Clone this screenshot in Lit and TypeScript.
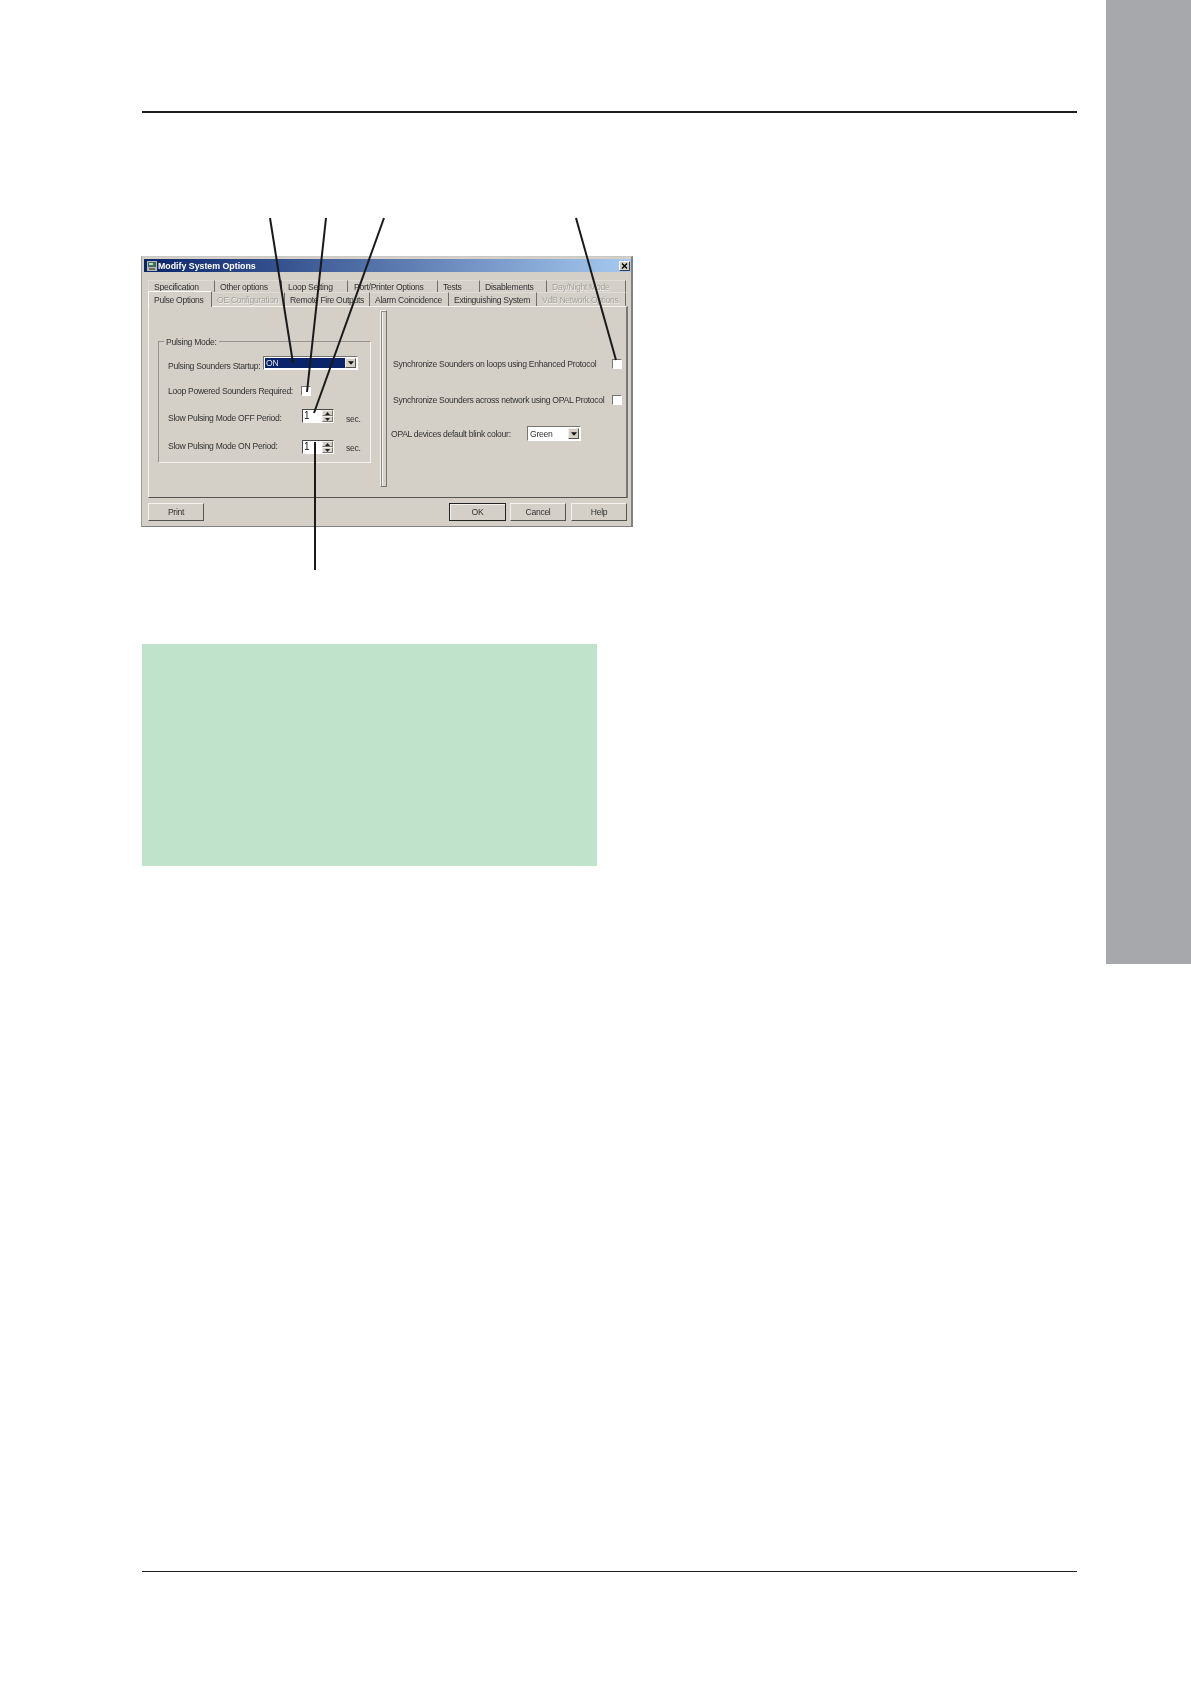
import { LitElement, html, css, svg } from "lit";
import { customElement } from "lit/decorators.js";

interface Tab { label: string; w: number; pad: number; off?: boolean; active?: boolean }

const ROW_BACK: Tab[] = [
  { label: "Specification", w: 67, pad: 5 },
  { label: "Other options", w: 67, pad: 5 },
  { label: "Loop Setting", w: 66, pad: 6 },
  { label: "Port/Printer Options", w: 90, pad: 6 },
  { label: "Tests", w: 42, pad: 5 },
  { label: "Disablements", w: 67, pad: 5 },
  { label: "Day/Night Mode", w: 79, pad: 5, off: true },
];
const ROW_FRONT: Tab[] = [
  { label: "Pulse Options", w: 64, pad: 5, active: true },
  { label: "OE Configuration", w: 73, pad: 5, off: true },
  { label: "Remote Fire Outputs", w: 85, pad: 5 },
  { label: "Alarm Coincidence", w: 79, pad: 5 },
  { label: "Extinguishing System", w: 88, pad: 5 },
  { label: "VdB Network Options", w: 89, pad: 5, off: true },
];

const LEADERS: [number, number, number, number][] = [
  [270, 218, 293, 363],
  [326, 218, 307, 392],
  [384, 218, 314, 413],
  [576, 218, 616, 360],
  [315, 442, 315, 570],
];

const arrow = html`<svg class="arrow" viewBox="0 0 7 4" width="6" height="4"><path d="M0 0h7L3.5 4z" fill="#111"/></svg>`;

@customElement("app-root")
export class AppRoot extends LitElement {
  static styles = css`
    :host { display: block; position: relative; width: 1191px; height: 1684px; background: #fff; overflow: hidden; font-family: "Liberation Sans", Arial, sans-serif; }
    .page { display: flex; height: 100%; }
    .main { width: 1106px; box-sizing: border-box; padding: 111px 29px 0 142px; }
    .aside { width: 85px; height: 964px; background: #a7a8ab; }
    .rule { background: #1f1f1f; height: 2px; }
    .rule.foot { margin-top: 705px; height: 1.2px; }
    .green { width: 455px; height: 222px; margin-top: 117px; background: #c0e4cb; }
    .leaders { position: absolute; left: 0; top: 0; pointer-events: none; }

    .dialog { width: 492px; height: 271px; margin: 143px 0 0 -1px; box-sizing: border-box; background: #d4d0c8;
      border-top: 1px solid #c8c8c4; border-left: 1px solid #9c9c98; border-right: 2px solid #808080; border-bottom: 1px solid #808080;
      padding: 2px 0 0 2px; font-size: 8.6px; letter-spacing: -0.3px; color: #333; line-height: 12px; filter: blur(0.35px); }
    .title { width: 487px; height: 13px; box-sizing: border-box; display: flex; align-items: center; padding: 0 1px 0 3px; background: linear-gradient(90deg, #0a246a, #a6caf0); color: #fff; font-weight: bold; font-size: 8.8px; letter-spacing: 0; }
    .title .name { margin-left: 1px; flex: 1; }
    .ico, .close { display: block; }
    .close { width: 11px; height: 10px; background: #d4d0c8; border: 1px solid; border-color: #fff #404040 #404040 #fff; box-sizing: border-box; }

    .tabs { display: flex; margin-left: 4px; }
    .tabs.back { margin-top: 8px; height: 12px; }
    .tabs.front { height: 14px; }
    .tab { box-sizing: border-box; white-space: nowrap; border-right: 1px solid #6f6f6b; border-top: 1px solid #dedcd6; display: flex; align-items: center; }
    .tab.first { border-left: 1px solid #dedcd6; }
    .tab.off { color: #a3a29c; text-shadow: 0.6px 0.6px 0 #f2f1ec; }
    .front .tab.active { border-left: 1px solid #fff; border-top: 1px solid #fff; border-right: 1px solid #6f6f6b; margin-top: -1px; height: 16px; position: relative; z-index: 1; background: #d4d0c8; }

    .panel { margin-left: 4px; width: 480px; height: 192px; box-sizing: border-box; border-top: 1px solid #f4f3ef; border-left: 1px solid #f4f3ef; border-right: 2px solid #77777a; border-bottom: 1px solid #55554f; display: flex; }
    .left { width: 231px; box-sizing: border-box; padding: 34px 0 0 9px; flex: none; }
    .group { position: relative; width: 213px; height: 122px; box-sizing: border-box; border: 1px solid; border-color: #95948e #f4f3ef #f4f3ef #95948e; padding: 14px 0 0 9px; }
    .legend { position: absolute; top: -6px; left: 5px; padding: 0 2px; background: #d4d0c8; }
    .row { display: flex; align-items: center; height: 14px; white-space: nowrap; }
    .r2 { margin-top: 14px; }
    .r3 { margin-top: 11px; }
    .r4 { margin-top: 17px; }
    .la { width: 95px; position: relative; top: 3px; }
    .lb { width: 133px; }
    .lc { width: 134px; position: relative; top: 2px; }
    .ld { width: 134px; position: relative; top: -1px; }
    .sec { margin-left: 12px; position: relative; top: 3px; }
    .r4 .sec { top: 1px; }

    .check { width: 10px; height: 10px; box-sizing: border-box; background: #fff; border: 1px solid; border-color: #77776f #fff #fff #77776f; display: block; }
    .sel { box-sizing: border-box; height: 14px; border: 1px solid; border-color: #77776f #fff #fff #77776f; background: #fff; display: flex; align-items: center; padding: 1px; }
    .sel .val { flex: 1; padding-left: 1px; height: 100%; display: flex; align-items: center; }
    .sel .navy { background: #0a246a; color: #dfe4f2; }
    .btn { width: 11px; height: 100%; box-sizing: border-box; background: #d4d0c8; border: 1px solid; border-color: #f0efeb #55554f #55554f #f0efeb; display: flex; align-items: center; justify-content: center; }
    .arrow { display: block; }
    .s-on { width: 95px; }
    .s-green { width: 54px; height: 15px; }
    .spin { width: 32px; height: 14px; box-sizing: border-box; border: 1px solid; border-color: #4a4a46 #fff #fff #4a4a46; background: #fff; display: flex; color: #111; font-size: 10px; }
    .spin .n { flex: 1; padding-left: 1px; line-height: 12px; }
    .spin .ud { width: 11px; display: flex; flex-direction: column; background: #d4d0c8; }
    .spin .ud i { flex: 1; border: 1px solid; border-color: #f0efeb #77776f #77776f #f0efeb; display: flex; align-items: center; justify-content: center; }
    .spin .ud svg { display: block; }

    .groove { width: 7px; height: 177px; margin: 3px 0 0 0; flex: none; border: 1px solid; border-color: #f4f3ef #77776f #77776f #f4f3ef; box-sizing: border-box; box-shadow: inset 1px 1px 0 #8a8a84, inset 2px 0 0 #f4f3ef; background: #d4d0c8; }
    .right { flex: 1; padding: 52px 0 0 6px; }
    .rrow { display: flex; align-items: center; white-space: nowrap; height: 10px; }
    .rrow .t { width: 219px; }
    .rrow.b { margin-top: 26px; }
    .rrow.c { margin-top: 21px; height: 15px; margin-left: -2px; }
    .rrow.c .t { width: 136px; }

    .foot-bar { display: flex; margin: 5px 0 0 4px; width: 480px; }
    .push { box-sizing: border-box; height: 18px; width: 56px; background: #d4d0c8; border: 1px solid; border-color: #f4f3ef #55554f #55554f #f4f3ef; text-align: center; line-height: 16px; }
    .push.def { border-color: #222; box-shadow: inset 1px 1px 0 #f4f3ef; width: 57px; }
    .push.cancel { margin-left: 4px; }
    .push.help { margin-left: 5px; }
    .spacer { width: 245px; }
  `;

  private tabs(list: Tab[], cls: string) {
    return html`<div class="tabs ${cls}">${list.map((t, i) => html`
      <div class="tab ${t.off ? "off" : ""} ${t.active ? "active" : ""} ${i === 0 ? "first" : ""}" style="width:${t.w}px;padding-left:${t.pad}px">${t.label}</div>`)}</div>`;
  }

  private spin() {
    return html`<div class="spin"><span class="n">1</span><span class="ud">
      <i><svg width="5" height="3" viewBox="0 0 5 3"><path d="M2.5 0L5 3H0z" fill="#222"/></svg></i>
      <i><svg width="5" height="3" viewBox="0 0 5 3"><path d="M0 0h5L2.5 3z" fill="#222"/></svg></i>
    </span></div>`;
  }

  render() {
    return html`
      <div class="page">
        <div class="main">
          <div class="rule"></div>
          <div class="dialog">
            <div class="title">
              <svg class="ico" width="10" height="10" viewBox="0 0 10 10"><rect width="10" height="10" fill="#b8b8b0"/><rect x="1" y="1" width="8" height="5" fill="#3f6f5a"/><rect x="2" y="2" width="4" height="2" fill="#c8d8c8"/><rect x="2" y="7" width="6" height="2" fill="#70706a"/></svg>
              <span class="name">Modify System Options</span>
              <svg class="close" viewBox="0 0 9 8"><path d="M2 1.5l5 5M7 1.5l-5 5" stroke="#000" stroke-width="1.4" fill="none"/></svg>
            </div>
            ${this.tabs(ROW_BACK, "back")}
            ${this.tabs(ROW_FRONT, "front")}
            <div class="panel">
              <div class="left">
                <div class="group">
                  <span class="legend">Pulsing Mode:</span>
                  <div class="row"><span class="la">Pulsing Sounders Startup:</span>
                    <div class="sel s-on"><span class="val navy">ON</span><span class="btn">${arrow}</span></div></div>
                  <div class="row r2"><span class="lb">Loop Powered Sounders Required:</span><span class="check"></span></div>
                  <div class="row r3"><span class="lc">Slow Pulsing Mode OFF Period:</span>${this.spin()}<span class="sec">sec.</span></div>
                  <div class="row r4"><span class="ld">Slow Pulsing Mode ON Period:</span>${this.spin()}<span class="sec">sec.</span></div>
                </div>
              </div>
              <div class="groove"></div>
              <div class="right">
                <div class="rrow"><span class="t">Synchronize Sounders on loops using Enhanced Protocol</span><span class="check"></span></div>
                <div class="rrow b"><span class="t">Synchronize Sounders across network using OPAL Protocol</span><span class="check"></span></div>
                <div class="rrow c"><span class="t">OPAL devices default blink colour:</span>
                  <div class="sel s-green"><span class="val">Green</span><span class="btn">${arrow}</span></div></div>
              </div>
            </div>
            <div class="foot-bar">
              <div class="push">Print</div>
              <div class="spacer"></div>
              <div class="push def">OK</div>
              <div class="push cancel">Cancel</div>
              <div class="push help">Help</div>
            </div>
          </div>
          <div class="green"></div>
          <div class="rule foot"></div>
        </div>
        <div class="aside"></div>
      </div>
      <svg class="leaders" width="1191" height="1684" viewBox="0 0 1191 1684">
        ${LEADERS.map(([a, b, c, d]) => svg`<line x1=${a} y1=${b} x2=${c} y2=${d} stroke="#1a1a1a" stroke-width="2"/>`)}
      </svg>
    `;
  }
}
